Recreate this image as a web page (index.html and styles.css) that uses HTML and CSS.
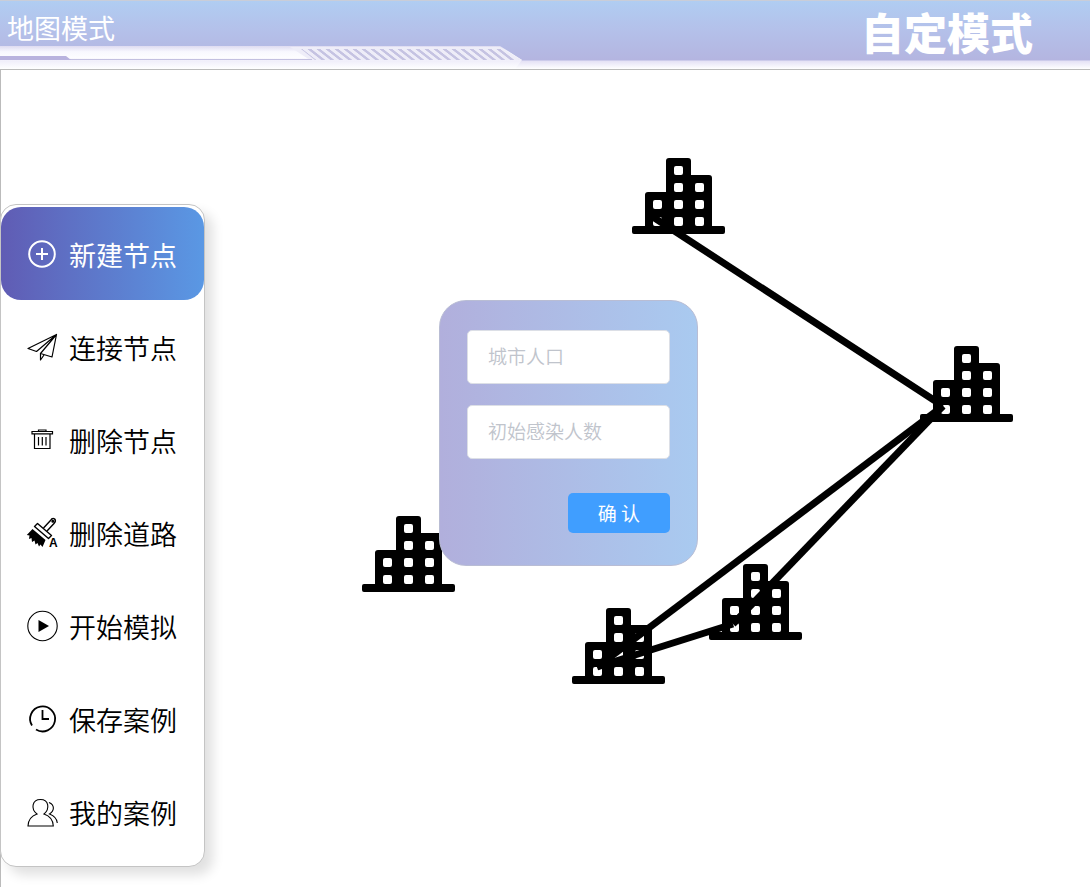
FILE: index.html
```html
<!DOCTYPE html>
<html lang="zh-CN">
<head>
<meta charset="utf-8">
<title>自定模式</title>
<link rel="stylesheet" href="styles.css">
</head>
<body>
<header class="topbar">
  <svg class="topbar-trim" width="540" height="23" aria-hidden="true">
    <defs>
      <pattern id="stripes" width="9" height="12" patternUnits="userSpaceOnUse" patternTransform="translate(0 2) skewX(52)">
        <rect width="4" height="12" fill="#c5c3e2"/>
      </pattern>
      <linearGradient id="fade" x1="0" y1="0" x2="0" y2="1">
        <stop offset="0" stop-color="#dedbf1"/>
        <stop offset=".25" stop-color="#f8f8fe"/>
        <stop offset=".5" stop-color="#fdfdff"/>
        <stop offset=".65" stop-color="#f0eefa"/>
        <stop offset="1" stop-color="#ffffff"/>
      </linearGradient>
    </defs>
    <path d="M0 0H500L522 14L515 23H0Z" fill="url(#fade)"/>
    <path d="M290 1H500L522 14H310Z" fill="#eeedf8"/>
    <path d="M301 3H501L519 14H315Z" fill="url(#stripes)"/>
    <path d="M70 13.500H312" stroke="#c3c0e0"/>
    <path d="M0 10H66L71 14H0Z" fill="#b9b3de"/>
  </svg>
  <span class="mode-name">地图模式</span>
  <h1 class="title">自定模式</h1>
</header>
<main class="workspace">
  <svg class="map" role="img" aria-label="城市节点图">
    <defs>
      <g id="city">
        <path fill-rule="evenodd" d="M2 68H13V37Q13 34 16 34H34V3Q34 0 37 0H56Q59 0 59 3V17H77Q80 17 80 20V68H91Q93 68 93 70V74Q93 76 91 76H2Q0 76 0 74V70Q0 68 2 68Z
        M44 8h5q2 0 2 2v5q0 2-2 2h-5q-2 0-2-2v-5q0-2 2-2Z
        M44 25h5q2 0 2 2v5q0 2-2 2h-5q-2 0-2-2v-5q0-2 2-2Z
        M65 25h5q2 0 2 2v5q0 2-2 2h-5q-2 0-2-2v-5q0-2 2-2Z
        M23 42h5q2 0 2 2v5q0 2-2 2h-5q-2 0-2-2v-5q0-2 2-2Z
        M44 42h5q2 0 2 2v5q0 2-2 2h-5q-2 0-2-2v-5q0-2 2-2Z
        M65 42h5q2 0 2 2v5q0 2-2 2h-5q-2 0-2-2v-5q0-2 2-2Z
        M23 59h5q2 0 2 2v5q0 2-2 2h-5q-2 0-2-2v-5q0-2 2-2Z
        M44 59h5q2 0 2 2v5q0 2-2 2h-5q-2 0-2-2v-5q0-2 2-2Z
        M65 59h5q2 0 2 2v5q0 2-2 2h-5q-2 0-2-2v-5q0-2 2-2Z"/>
      </g>
    </defs>
    <use href="#city" x="632" y="88"/>
    <use href="#city" x="920" y="276"/>
    <use href="#city" x="362" y="446"/>
    <use href="#city" x="709" y="494"/>
    <use href="#city" x="572" y="538"/>
    <g class="roads">
      <path d="M653 147L943 336"/>
      <path d="M943 336L597 597"/>
      <path d="M597 597L733 554"/>
      <path d="M733 554L943 336"/>
    </g>
  </svg>

  <nav class="menu">
    <button type="button" class="menu-item active">
      <svg class="icon" viewBox="0 0 32 32"><g fill="none" stroke="currentColor" stroke-width="2"><circle cx="16" cy="16" r="12.800"/><path d="M16 10V22M10 16H22"/></g></svg>
      <span class="label">新建节点</span>
    </button>
    <button type="button" class="menu-item">
      <svg class="icon" viewBox="0 0 32 32"><g fill="none" stroke="currentColor" stroke-width="1.200" stroke-linejoin="round"><path d="M30.500 3.500L2 17.500L10.500 20.500L30.500 3.500L14.500 22.500L26 26Z"/><path d="M14.500 22.500V29L18 24"/></g></svg>
      <span class="label">连接节点</span>
    </button>
    <button type="button" class="menu-item">
      <svg class="icon" viewBox="0 0 32 32"><g fill="none" stroke="currentColor" stroke-width="1.200"><path d="M6 7.500H26.500V9.800H6ZM12.500 7.500V6H20V7.500M8.500 10V24.500H24V10M12.500 13V21.500M16.300 13V21.500M20 13V21.500"/></g></svg>
      <span class="label">删除节点</span>
    </button>
    <button type="button" class="menu-item">
      <svg class="icon" viewBox="0 0 32 32"><g fill="none" stroke="currentColor" stroke-width="1.400" stroke-linejoin="round"><path d="M11.500 6.500L25.500 18.500L22.500 21.500L8.500 9.500Z"/><path d="M17.500 11L24.500 3.500Q26 .8 28.500 1.800Q30.500 4 28 6.500L21 14"/><circle cx="26.800" cy="4.200" r=".8"/></g><path d="M6.500 12L19.500 23L16.500 30L14.500 27.500L13 29.500L11.500 26L9.500 27.500L8.500 23.500L6 25L5.500 21L3 22L3.500 18.500L.8 18Z"/><text class="icon-letter" x="23" y="30">A</text></svg>
      <span class="label">删除道路</span>
    </button>
    <button type="button" class="menu-item">
      <svg class="icon" viewBox="0 0 32 32"><circle cx="16.500" cy="16" r="14.700" fill="none" stroke="currentColor" stroke-width="1.100"/><path d="M12.500 10L23 16L12.500 22Z"/></svg>
      <span class="label">开始模拟</span>
    </button>
    <button type="button" class="menu-item">
      <svg class="icon" viewBox="0 0 32 32"><g fill="none" stroke="currentColor" stroke-width="1.800"><path d="M6 22.500A12.500 12.500 0 1 1 10 26.500"/><path d="M16.500 7V16H23"/></g></svg>
      <span class="label">保存案例</span>
    </button>
    <button type="button" class="menu-item">
      <svg class="icon" viewBox="0 0 32 32"><g fill="none" stroke="currentColor" stroke-width="1.100"><path d="M11 18C4.500 13 6 3.500 14.500 3.500S24 13 18 18C24 20 27 23.500 27.300 30H2C2.300 23.500 5 20 11 18Z"/><path d="M23 6.500C29 9 28.500 15 23.500 18C28.500 20 31 23 31.300 27"/></g></svg>
      <span class="label">我的案例</span>
    </button>
  </nav>

  <form class="dialog">
    <input class="field" type="text" aria-label="城市人口" placeholder="城市人口">
    <input class="field" type="text" aria-label="初始感染人数" placeholder="初始感染人数">
    <button class="confirm" type="button">确 认</button>
  </form>
</main>
</body>
</html>
```

FILE: styles.css
```css
* {
  box-sizing: border-box;
}

body {
  margin: 0;
  min-height: 100vh;
  display: flex;
  flex-direction: column;
  background: #fff;
  color: #000;
  font-family: "Noto Sans CJK SC", sans-serif;
  font-weight: 350;
}

button,
input {
  font: inherit;
}

.topbar {
  position: relative;
  display: flex;
  justify-content: space-between;
  align-items: flex-start;
  height: 69px;
  padding: 0 57px 0 7px;
  border-top: 1px solid #c9cdd8;
  background: linear-gradient(#b0cdf2 0, #b4c1ea 28px, #b4b5e0 59px, #e4e1f5 60px, #fff 68px);
  color: #fff;
}

.topbar-trim {
  position: absolute;
  left: 0;
  bottom: 0;
}

.mode-name {
  font-size: 27px;
  line-height: 54px;
  font-weight: 400;
}

.title {
  margin: 0;
  font-size: 43px;
  line-height: 60px;
  font-weight: 900;
}

.workspace {
  position: relative;
  flex: 1;
  padding: 134px 0 20px;
  border-top: 1px solid #bbb;
  background: linear-gradient(#bbb, #bbb) left / 1px 100% no-repeat;
}

.map {
  position: absolute;
  top: 0;
  left: 0;
  width: 100%;
  height: 100%;
}

.roads {
  fill: none;
  stroke: #000;
  stroke-width: 7px;
}

.menu {
  position: relative;
  display: flex;
  flex-direction: column;
  width: 205px;
  padding: 2px 0 8px;
  border: 1px solid #c4c4c4;
  border-radius: 16px;
  background: #fff;
  box-shadow: 8px 8px 12px rgba(0, 0, 0, 0.12);
}

.menu-item {
  display: flex;
  align-items: center;
  gap: 11px;
  height: 93px;
  padding: 0 0 0 25px;
  border: 0;
  border-radius: 20px;
  background: none;
  color: #000;
  font-size: 27px;
  line-height: 40px;
}

.label {
  padding-top: 2px;
}

.menu-item.active {
  background: linear-gradient(90deg, #605cb4, #5a98e4);
  color: #fff;
  font-weight: 400;
}

.icon {
  width: 32px;
  height: 32px;
  flex: none;
  overflow: visible;
}

.icon-letter {
  font: 700 12px "Liberation Sans", sans-serif;
}

.dialog {
  position: absolute;
  top: 230px;
  left: 439px;
  display: flex;
  flex-direction: column;
  width: 259px;
  padding: 29px 27px 32px;
  border: 1px solid #b9bdd4;
  border-radius: 27px;
  background: linear-gradient(90deg, #b1afdc, #a9caf0);
}

.field {
  width: 100%;
  height: 54px;
  margin-bottom: 21px;
  padding: 0 20px 4px;
  border: 1px solid #dcdfe6;
  border-radius: 5px;
  background: #fff;
  font-size: 19px;
}

.field::placeholder {
  color: #c0c4cc;
  opacity: 1;
}

.confirm {
  align-self: flex-end;
  width: 102px;
  height: 40px;
  margin-top: 13px;
  padding: 0 0 2px;
  border: 0;
  border-radius: 5px;
  background: #409eff;
  color: #fff;
  font-size: 19px;
  font-weight: 400;
}
```
